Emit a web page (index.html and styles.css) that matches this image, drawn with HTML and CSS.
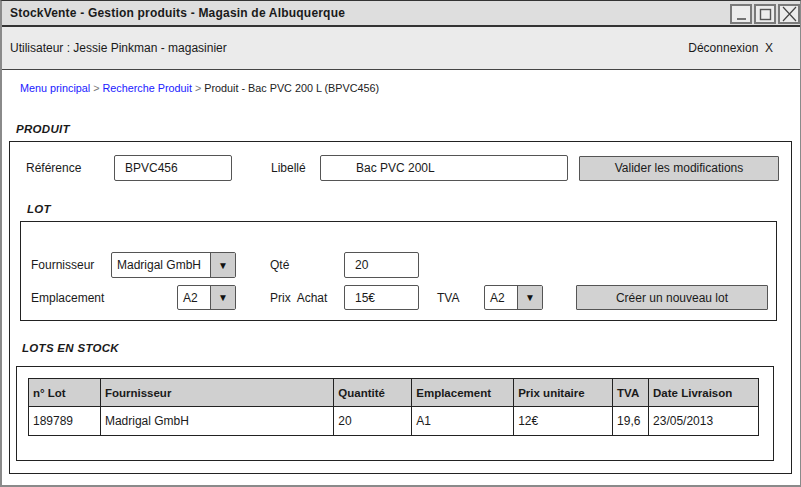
FILE: index.html
```html
<!DOCTYPE html>
<html lang="fr">
<head>
<meta charset="utf-8">
<title>StockVente</title>
<link rel="stylesheet" href="styles.css">
</head>
<body>
<div class="window">
  <div class="titlebar">
    <span class="title">StockVente - Gestion produits - Magasin de Albuquerque</span>
    <div class="winbtns">
      <span class="wbtn"><svg width="17" height="16" viewBox="0 0 17 16"><line x1="4" y1="13" x2="13" y2="13" stroke="#555" stroke-width="1.6"/></svg></span>
      <span class="wbtn"><svg width="17" height="16" viewBox="0 0 17 16"><rect x="3.5" y="3.5" width="10" height="10" fill="none" stroke="#555" stroke-width="1.4"/></svg></span>
      <span class="wbtn"><svg width="17" height="16" viewBox="0 0 17 16"><path d="M2 1 L15 15 M15 1 L2 15" stroke="#444" stroke-width="1.2"/></svg></span>
    </div>
  </div>
  <div class="header">
    <span>Utilisateur : Jessie Pinkman - magasinier</span>
    <span class="logout">Déconnexion&nbsp; X</span>
  </div>
  <div class="content">
    <div class="crumbs"><a>Menu principal</a> <span class="sep">&gt;</span> <a>Recherche Produit</a> <span class="sep">&gt;</span> Produit - Bac PVC 200 L (BPVC456)</div>
    <div class="h h-produit">PRODUIT</div>
    <div class="box produit">
      <div class="prow">
        <span class="lbl w-ref">Référence</span>
        <span class="field w-refin">BPVC456</span>
        <span class="lbl w-lib">Libellé</span>
        <span class="field w-libin">Bac PVC 200L</span>
        <span class="btn w-valid">Valider les modifications</span>
      </div>
      <div class="h h-lot">LOT</div>
      <div class="box lot">
        <div class="lotgrid">
          <span class="lbl c1">Fournisseur</span>
          <span class="combo c2 w-four"><span class="cv">Madrigal GmbH</span><span class="arr">▼</span></span>
          <span class="lbl c4">Qté</span>
          <span class="field c5 fld-sm">20</span>
          <span class="lbl c1 r2">Emplacement</span>
          <span class="combo c2 r2 w-small end"><span class="cv">A2</span><span class="arr">▼</span></span>
          <span class="lbl c4 r2">Prix&nbsp; Achat</span>
          <span class="field c5 r2 fld-sm">15€</span>
          <span class="lbl c7 r2">TVA</span>
          <span class="combo c8 r2 w-small"><span class="cv">A2</span><span class="arr">▼</span></span>
          <span class="btn c10 r2">Créer un nouveau lot</span>
        </div>
      </div>
      <div class="h h-stock">LOTS EN STOCK</div>
      <div class="box stock">
        <table class="lots">
          <thead>
            <tr><th class="k1">n° Lot</th><th class="k2">Fournisseur</th><th class="k3">Quantité</th><th class="k4">Emplacement</th><th class="k5">Prix unitaire</th><th class="k6">TVA</th><th class="k7">Date Livraison</th></tr>
          </thead>
          <tbody>
            <tr><td>189789</td><td>Madrigal GmbH</td><td>20</td><td>A1</td><td>12€</td><td>19,6</td><td>23/05/2013</td></tr>
          </tbody>
        </table>
      </div>
    </div>
  </div>
</div>
</body>
</html>
```
FILE: styles.css
```css
* { box-sizing: border-box; }
html, body { margin: 0; padding: 0; background: #fff; }
body {
  width: 801px; height: 487px; overflow: hidden;
  font-family: "Liberation Sans", Arial, sans-serif;
  font-size: 12px; color: #1a1a1a;
}
.window {
  width: 801px; height: 487px;
  border: 1px solid #8a8a8a;
  border-top-color: #333;
  border-left-width: 2px;
  border-bottom-width: 2px;
  display: flex; flex-direction: column;
}
.titlebar {
  height: 26px; flex: none;
  background: #dedede;
  border-bottom: 2px solid #333;
  display: flex; align-items: center; justify-content: space-between;
  padding-left: 8px;
}
.title { font-weight: bold; font-size: 12px; letter-spacing: 0.2px; }
.winbtns { display: flex; gap: 2px; align-self: flex-start; margin-top: 3px; }
.wbtn {
  width: 22px; height: 20px; border: 2px solid #7a7a7a; background: #ececec;
  display: flex; align-items: center; justify-content: center;
}
.header {
  height: 43px; flex: none;
  background: #ebebeb;
  border-bottom: 1px solid #444;
  display: flex; align-items: center; justify-content: space-between;
  padding: 0 27px 0 8px;
  font-size: 12px;
}
.content { flex: 1; padding: 0 8px 0 7px; display: flex; flex-direction: column; }
.crumbs {
  font-family: "Liberation Sans", Arial, sans-serif; font-size: 10.8px;
  margin: 11px 0 0 11px; height: 14px; line-height: 14px; color: #222;
}
.crumbs a { color: #2020ff; }
.crumbs .sep { color: #777; }
.h { font-weight: bold; font-style: italic; font-size: 11.5px; letter-spacing: 0.3px; }
.h-produit { margin: 27px 0 0 7px; height: 14px; line-height: 14px; }
.box { border: 1px solid #222; }
.produit { margin-top: 5px; height: 333px; padding: 13px 0 0 0; }
.prow { display: flex; align-items: center; height: 26px; padding-left: 16px; }
.lbl { white-space: nowrap; }
.w-ref { width: 88px; }
.w-refin { width: 118px; }
.w-lib { width: 49px; margin-left: 39px; }
.w-libin { width: 248px; padding-left: 35px !important; }
.w-valid { width: 200px; margin-left: 11px; height: 25px; }
.field {
  height: 26px; border: 1px solid #555; border-radius: 2px; background: #fff;
  display: flex; align-items: center; padding-left: 10px;
}
.btn {
  border: 1px solid #555; background: #d2d2d2; border-radius: 1px;
  display: flex; align-items: center; justify-content: center;
}
.h-lot { margin: 21px 0 0 17px; height: 14px; line-height: 14px; }
.lot { margin: 5px 14px 0 10px; height: 100px; padding: 30px 0 0 10px; }
.lotgrid {
  display: grid;
  grid-template-columns: 80px 125px 34px 74px 75px 18px 47px 59px 33px 192px;
  grid-template-rows: 26px 25px;
  row-gap: 7px;
  align-items: center;
}
.c1 { grid-column: 1; } .c2 { grid-column: 2; } .c4 { grid-column: 4; }
.c5 { grid-column: 5; } .c7 { grid-column: 7; } .c8 { grid-column: 8; }
.c10 { grid-column: 10; height: 25px; }
.r2 { grid-row: 2; }
.fld-sm { height: 26px; }
.r2.fld-sm { height: 25px; }
.combo {
  height: 26px; border: 1px solid #555; border-radius: 2px; background: #fff;
  display: flex; overflow: hidden;
}
.r2.combo { height: 25px; }
.combo .cv { flex: 1; display: flex; align-items: center; padding-left: 5px; white-space: nowrap; }
.combo .arr {
  width: 25px; flex: none; background: #cfcfcf; border-left: 1px solid #555;
  display: flex; align-items: center; justify-content: center; font-size: 10px; color: #111;
}
.w-small { width: 59px; }
.end { justify-self: end; }
.h-stock { margin: 20px 0 0 12px; height: 14px; line-height: 14px; }
.stock { margin: 11px 17px 0 6px; height: 95px; padding: 11px 0 0 11px; }
.lots { border-collapse: collapse; width: 731px; }
.lots th, .lots td {
  border: 1px solid #222; text-align: left; padding: 0 4px; white-space: nowrap;
}
.lots th { background: #d0d0d0; height: 28px; font-weight: bold; font-size: 11.5px; }
.lots td { height: 29px; }
.k1 { width: 72px; } .k2 { width: 234px; } .k3 { width: 78px; } .k4 { width: 102px; }
.k5 { width: 99px; } .k6 { width: 36px; } .k7 { width: 110px; }
```
